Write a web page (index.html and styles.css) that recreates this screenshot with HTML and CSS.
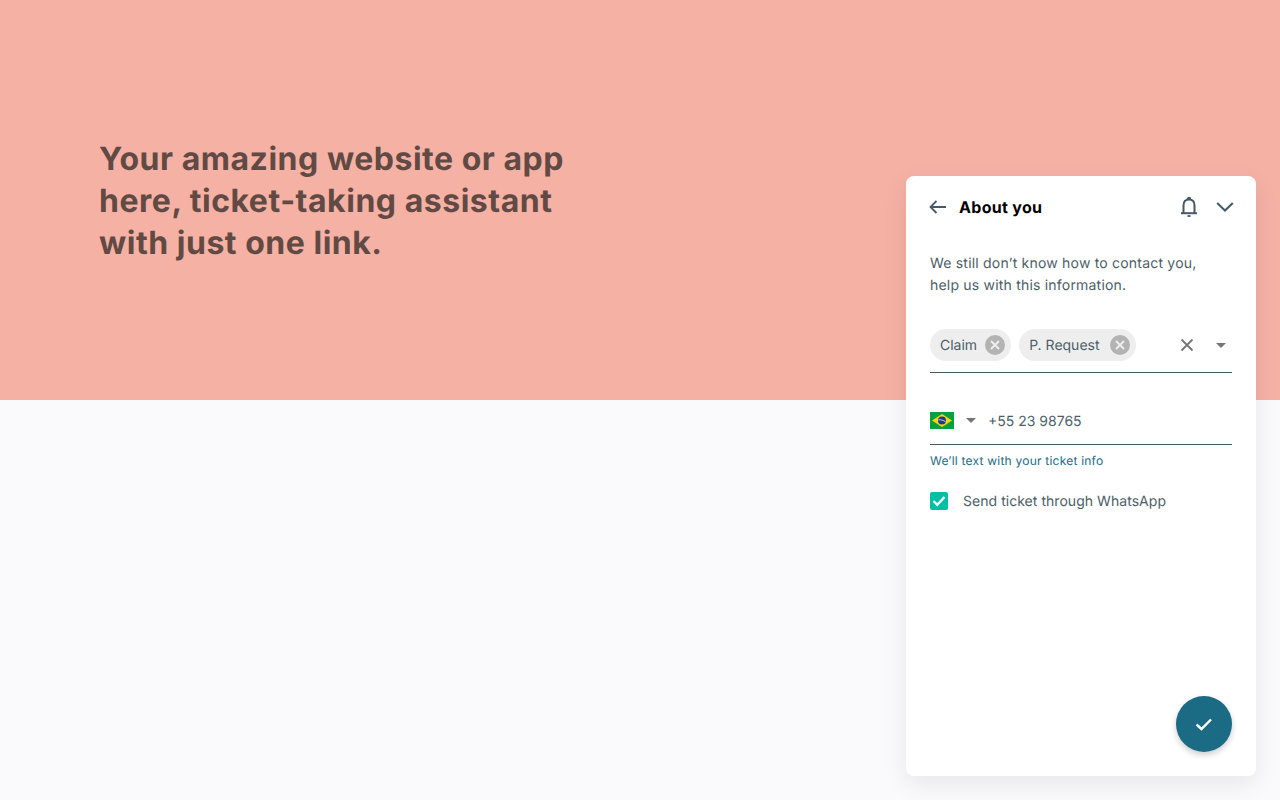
FILE: index.html
```html
<!DOCTYPE html>
<html lang="en">
<head>
    <meta charset="UTF-8">
    <meta name="viewport" content="width=device-width, initial-scale=1.0">
    <title>About you</title>
    <link rel="stylesheet" href="styles.css">
</head>
<body>
    <div class="hero">
        <h1>Your amazing website or app here, ticket-taking assistant with just one link.</h1>
    </div>

    <div class="panel">
        <div class="panel-head">
            <svg class="back-icon" width="18" height="14" viewBox="0 0 18 14" fill="none" stroke="#455a64" stroke-width="1.8">
                <path d="M17 7H1.500M7.500 1L1.500 7l6 6"/>
            </svg>
            <h2>About you</h2>
            <svg class="bell-icon" width="18" height="22" viewBox="0 0 18 22" fill="none" stroke="#455a64" stroke-width="2">
                <path d="M3.500 17V9.500C3.500 6 5.500 3.500 9 3.500s5.500 2.500 5.500 6V17"/>
                <path d="M1 17.200h16" stroke-width="2"/>
                <path d="M7.800 3a1.200 1.200 0 0 1 2.400 0"/>
                <path d="M7.500 20h3" stroke-width="1.800"/>
            </svg>
            <svg class="chevron-icon" width="18" height="10" viewBox="0 0 18 10" fill="none" stroke="#455a64" stroke-width="2">
                <path d="M1.200 1l7.800 7.500L16.800 1"/>
            </svg>
        </div>

        <p class="intro">We still don’t know how to contact you,<br>help us with this information.</p>

        <div class="tag-field">
            <span class="chip">Claim
                <span class="chip-x"><svg width="10" height="10" viewBox="0 0 10 10" fill="none" stroke="#eeeeee" stroke-width="2"><path d="M1 1l8 8M9 1l-8 8"/></svg></span>
            </span>
            <span class="chip chip-wide">P. Request
                <span class="chip-x"><svg width="10" height="10" viewBox="0 0 10 10" fill="none" stroke="#eeeeee" stroke-width="2"><path d="M1 1l8 8M9 1l-8 8"/></svg></span>
            </span>
            <svg class="clear-icon" width="14" height="14" viewBox="0 0 14 14" fill="none" stroke="#757575" stroke-width="1.800"><path d="M1.500 1.500l11 11M12.500 1.500l-11 11"/></svg>
            <span class="caret"></span>
        </div>

        <div class="phone-field">
            <svg class="flag" width="24" height="17" viewBox="0 0 24 17">
                <rect width="24" height="17" fill="#05a13c"/>
                <path d="M12 2L22 8.500 12 15 2 8.500z" fill="#fdd216"/>
                <circle cx="12" cy="8.500" r="4" fill="#1b3c84"/>
                <path d="M8.300 7.800c2.500-.3 5.300.5 7.300 2" stroke="#e8eef0" stroke-width=".8" fill="none"/>
            </svg>
            <span class="caret"></span>
            <span class="phone-number">+55 23 98765</span>
        </div>
        <p class="hint">We’ll text with your ticket info</p>

        <label class="check-row">
            <span class="checkbox">
                <svg width="14" height="12" viewBox="0 0 14 12" fill="none" stroke="#ffffff" stroke-width="2.400"><path d="M1.500 6l3.800 3.800L12.500 2"/></svg>
            </span>
            Send ticket through WhatsApp
        </label>

        <button class="confirm">
            <svg width="18" height="14" viewBox="0 0 18 14" fill="none" stroke="#ffffff" stroke-width="2.400"><path d="M1.500 7.500l5 4.500L16 2.500"/></svg>
        </button>
    </div>
</body>
</html>
```

FILE: styles.css
```css
body {
    margin: 0;
    height: 800px;
    overflow: hidden;
    background-color: #fafafc;
    font-family: Inter, "Liberation Sans", sans-serif;
    color: #4b5e68;
    text-rendering: geometricPrecision;
}

.hero {
    height: 400px;
    box-sizing: border-box;
    padding: 138px 0 0 99px;
    background-color: #f5b1a4;
}

.hero h1 {
    margin: 0;
    width: 490px;
    font-size: 32px;
    line-height: 42px;
    font-weight: 700;
    letter-spacing: 0.52px;
    color: #614a44;
}

/* widget floats over the page */
.panel {
    position: absolute;
    left: 906px;
    top: 176px;
    width: 350px;
    height: 600px;
    box-sizing: border-box;
    padding: 0 24px;
    background-color: white;
    border-radius: 8px;
    box-shadow: 0 8px 24px rgba(0,0,0,0.08);
}

.panel-head {
    display: flex;
    align-items: center;
    height: 62px;
}

.back-icon {
    margin-left: -1px;
}

.panel-head h2 {
    margin: 0 0 0 12px;
    flex: 1;
    font-size: 16px;
    font-weight: 700;
    letter-spacing: 0.3px;
    color: black;
}

.bell-icon {
    margin-right: 18px;
}

.chevron-icon {
    margin-right: -2px;
}

.intro {
    margin: 15px 0 0 0;
    font-size: 14px;
    line-height: 22px;
    letter-spacing: 0.2px;
}

.tag-field {
    display: flex;
    align-items: center;
    gap: 8px;
    height: 32px;
    margin-top: 32px;
    padding-bottom: 11px;
    border-bottom: 1px solid #455a64;
}

.chip {
    display: flex;
    align-items: center;
    gap: 8px;
    height: 32px;
    padding: 0 6px 0 10px;
    border-radius: 16px;
    background-color: #eeeeee;
    font-size: 14px;
}

.chip-wide {
    gap: 10px;
}

.chip-x {
    display: flex;
    align-items: center;
    justify-content: center;
    width: 20px;
    height: 20px;
    border-radius: 50%;
    background-color: #b3b3b3;
}

.clear-icon {
    margin-left: auto;
    margin-right: 14px;
}

.caret {
    width: 0;
    height: 0;
    border-left: 5px solid transparent;
    border-right: 5px solid transparent;
    border-top: 5px solid #757575;
}

.tag-field .caret {
    margin-right: 6px;
}

.phone-field {
    display: flex;
    align-items: center;
    height: 32px;
    margin-top: 31px;
    padding-bottom: 8px;
    border-bottom: 1px solid #455a64;
}

.phone-field .caret {
    margin-left: 12px;
}

.phone-number {
    margin-left: 12px;
    margin-top: 2px;
    font-size: 14px;
}

.hint {
    margin: 8px 0 0 0;
    font-size: 12px;
    line-height: 15px;
    letter-spacing: 0.22px;
    color: #1b6b85;
}

.check-row {
    display: flex;
    align-items: center;
    gap: 15px;
    margin-top: 24px;
    font-size: 14px;
    letter-spacing: 0.04px;
}

.checkbox {
    display: flex;
    align-items: center;
    justify-content: center;
    width: 18px;
    height: 18px;
    border-radius: 2px;
    background-color: #00bfa5;
}

.confirm {
    position: absolute;
    right: 24px;
    bottom: 24px;
    display: flex;
    align-items: center;
    justify-content: center;
    width: 56px;
    height: 56px;
    padding: 0;
    border: none;
    border-radius: 50%;
    background-color: #1b6b85;
    box-shadow: 0 3px 6px rgba(0,0,0,0.2);
}
```
